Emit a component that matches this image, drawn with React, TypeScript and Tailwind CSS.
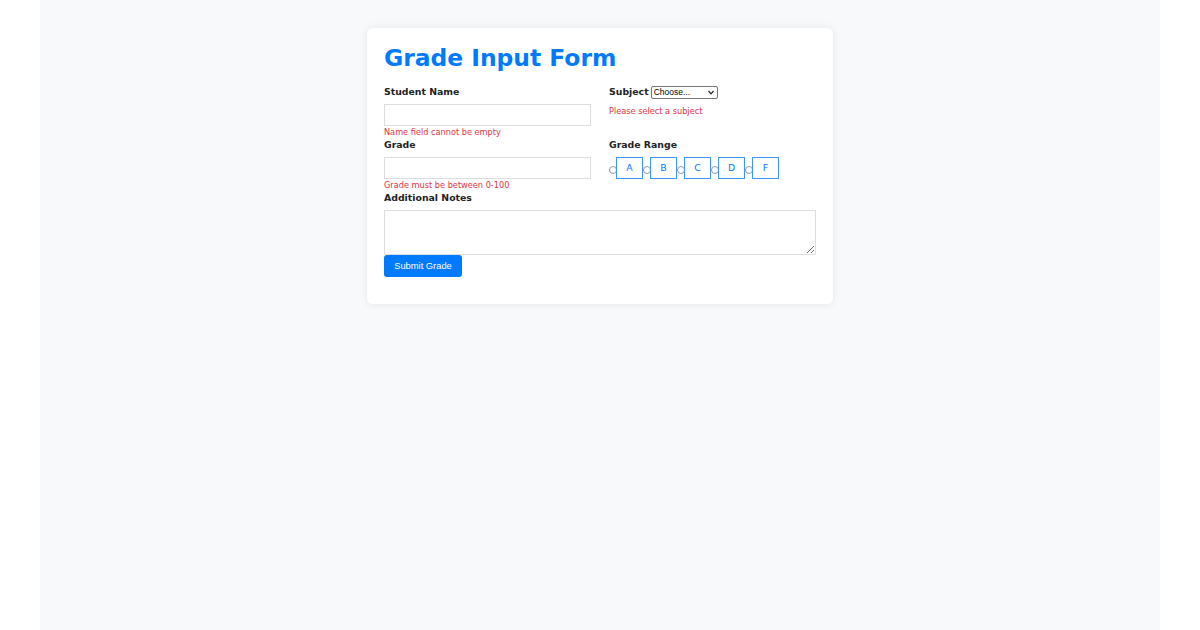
export default function App() {
  const grades = ["A", "B", "C", "D", "F"];

  return (
    <div className="min-h-screen bg-white" style={{ fontFamily: '"DejaVu Sans", sans-serif' }}>
      <div className="mx-auto w-[1120px] min-h-[630px] bg-[#f8f9fa] pt-[28px]">
        <div className="mx-auto w-[466px] rounded-md bg-white px-[17px] pt-[16px] pb-[27px] shadow-[0_0_8px_rgba(0,0,0,0.08)]">
          <h1 className="text-[23.4px] font-bold leading-[28px] text-[#007bff] mb-[14px]">
            Grade Input Form
          </h1>

          <div className="grid grid-cols-2 gap-x-[18px]">
            {/* row 1 */}
            <div className="h-[53px]">
              <label className="block text-[9.36px] font-bold leading-[12px] text-[#222] mb-[6px]">
                Student Name
              </label>
              <input type="text" className="block h-[22px] w-full border border-[#dedede] bg-white" />
              <div className="text-[8.2px] leading-[13px] text-[#dc3545]">Name field cannot be empty</div>
            </div>
            <div className="h-[53px]">
              <div className="flex items-center h-[13px] text-[9.36px] font-bold text-[#222]">
                <span>Subject</span>
                <span className="relative ml-[2px] inline-flex">
                  <select
                    className="h-[13px] w-[67px] appearance-none border border-[#767676] rounded-[2px] bg-white pl-[2px] text-[8.5px] leading-[11px] font-normal text-black"
                    style={{ fontFamily: '"Liberation Sans", Arial, sans-serif' }}
                  >
                    <option>Choose...</option>
                    <option>Math</option>
                    <option>Science</option>
                  </select>
                  <svg
                    className="pointer-events-none absolute right-[4px] top-[4px]"
                    width="6"
                    height="5"
                    viewBox="0 0 6 5"
                  >
                    <path d="M0.5 1 L3 3.8 L5.5 1" fill="none" stroke="#222" strokeWidth="1.2" />
                  </svg>
                </span>
              </div>
              <div className="mt-[6px] text-[8.2px] leading-[13px] text-[#dc3545]">Please select a subject</div>
            </div>

            {/* row 2 */}
            <div className="h-[53px]">
              <label className="block text-[9.36px] font-bold leading-[12px] text-[#222] mb-[6px]">Grade</label>
              <input type="number" className="block h-[22px] w-full border border-[#dedede] bg-white" />
              <div className="text-[8.2px] leading-[13px] text-[#dc3545]">Grade must be between 0-100</div>
            </div>
            <div className="h-[53px]">
              <label className="block text-[9.36px] font-bold leading-[12px] text-[#222] mb-[6px]">Grade Range</label>
              <div className="flex items-center">
                {grades.map((g) => (
                  <div key={g} className="flex items-center">
                    <span className="mt-[3px] h-[8px] w-[8px] rounded-full border border-[#999] bg-white" />
                    <span className="-ml-[1px] flex h-[22px] w-[27px] items-center justify-center border border-[#3d95f5] text-[9.36px] text-[#007bff]">
                      {g}
                    </span>
                  </div>
                ))}
              </div>
            </div>
          </div>

          <label className="block text-[9.36px] font-bold leading-[12px] text-[#222] mb-[6px]">Additional Notes</label>
          <textarea className="block h-[45px] w-full border border-[#dedede] bg-white" />
          <button
            className="block h-[22px] w-[78px] rounded-[3px] bg-[#007bff] text-[9.36px] text-white"
            style={{ fontFamily: '"Liberation Sans", Arial, sans-serif' }}
          >
            Submit Grade
          </button>
        </div>
      </div>
    </div>
  );
}
